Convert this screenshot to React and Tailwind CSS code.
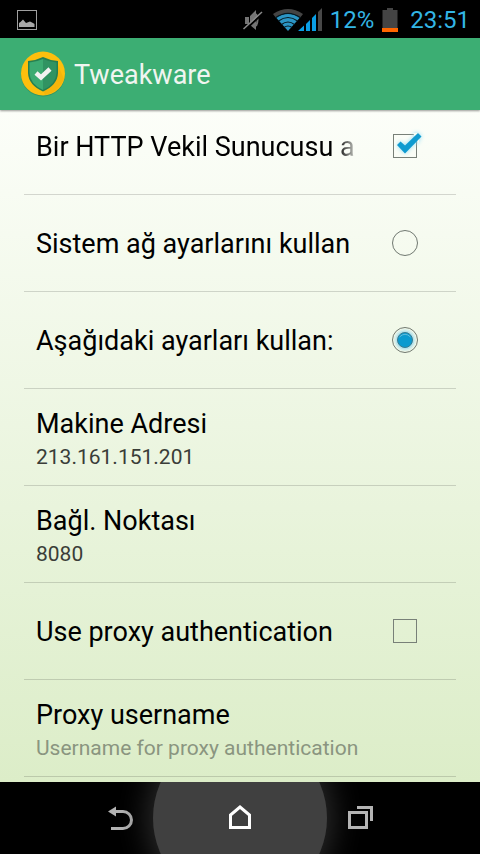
import React, { useState } from 'react';

const StatusBar = () => (
    <div className="flex h-[38px] shrink-0 items-center bg-black px-4 pt-px text-[24px] text-[#33b5e5]">
        <svg width="22" height="22" viewBox="0 0 22 22" aria-hidden="true">
            <rect x="1.5" y="1.5" width="19" height="19" fill="none" stroke="#a0a0a0" />
            <path d="M3 18V14L4.500 13L7 10.500L10 14L14 12.500L17 14L18.500 15V18Z" fill="#a8a8a8" />
        </svg>
        <div className="-mr-1.5 ml-auto flex items-center">
            <svg className="mr-2" width="22" height="24" viewBox="0 0 22 24" aria-hidden="true">
                <path d="M3 9H7V16H3ZM8 8L14 2V22L8 17Z" fill="#747474" />
                <path d="M14 6Q17 12 14 18" fill="none" stroke="#747474" strokeWidth="2" />
                <path d="M3 22L21 5" stroke="#000" strokeWidth="2" />
                <path d="M1.500 21L20 4" stroke="#8a8a8a" strokeWidth="1.5" />
            </svg>
            <svg className="mr-2" width="50" height="24" viewBox="0 0 50 24" aria-hidden="true">
                <path d="M1 6Q16 -4 31 6L28.300 9.500Q16 1.500 3.700 9.500Z" fill="#444" />
                <path d="M4 9.500Q16 2 28 9.500L16 23Z" fill="#2b95c4" />
                <g fill="none" stroke="#061820" strokeWidth="1.2">
                    <path d="M3.500 9.800Q16 1 28.500 9.800" />
                    <path d="M6.500 13Q16 6 25.500 13" />
                    <path d="M9.500 16.500Q16 11.500 22.500 16.500" />
                    <path d="M12 19.500Q16 16.500 20 19.500" />
                </g>
                <path d="M26 23L32 17.500V23ZM34 16L38 12V23H34ZM40 10L44 6V23H40Z" fill="#0a9ee5" />
                <path d="M46 4L50 0V23H46Z" fill="#484848" />
            </svg>
            <span>12%</span>
            <svg className="mx-2" width="16" height="24" viewBox="0 0 16 24" aria-hidden="true">
                <path d="M0.500 2H5V0H11V2H15.500V24H0.500Z" fill="#444" />
                <path d="M0 20H16V24H0Z" fill="#ff6600" />
            </svg>
            <span className="ml-1">23:51</span>
        </div>
    </div>
);

const Header = () => (
    <header className="z-10 flex h-[72px] shrink-0 items-center gap-2 bg-[#3cae73] pl-5 shadow-[0_1px_2px_rgba(0,0,0,0.4)]">
        <svg width="46" height="46" viewBox="0 0 46 46" aria-hidden="true">
            <circle cx="23" cy="23.500" r="22" fill="#2d8658" opacity="0.6" />
            <circle cx="23" cy="22.500" r="22" fill="#fdbf0d" />
            <path d="M37 12L44 28Q38 42 25 44L23 39Z" fill="#f5b50b" />
            <path d="M23 6Q30 9.500 38 10V22Q37.500 34 23 40.500Q8.500 34 8 22V10Q16 9.500 23 6Z" fill="#257f51" />
            <path d="M23 8Q16 11 9.500 11.500V22Q10 33 23 39Z" fill="#3cab72" />
            <path d="M23 8Q30 11 36.500 11.500V22Q36 33 23 39Z" fill="#309362" />
            <path d="M16 22L21 26.500L30 18" fill="none" stroke="#f2f2f2" strokeWidth="4.500" />
        </svg>
        <h1 className="pt-0.5 text-[27px] leading-8 text-[#f0f5f0]">Tweakware</h1>
    </header>
);

const rowStyle = 'flex h-[97px] items-center gap-8 border-b border-black/15 pl-3 pr-[38px]';

const CheckRow = ({ id, label, checked, onChange, faded }) => (
    <div className={rowStyle}>
        <label
            htmlFor={id}
            className={`min-w-0 flex-1 overflow-hidden whitespace-nowrap pt-0.5 text-[27px] leading-9 ${faded ? '[mask-image:linear-gradient(to_right,black_93%,transparent)]' : ''}`}
        >
            {label}
        </label>
        <div className="relative flex shrink-0 px-px">
            <input
                id={id}
                type="checkbox"
                checked={checked}
                onChange={onChange}
                className="size-6 appearance-none border border-[#788078]"
            />
            {checked && (
                <svg className="pointer-events-none absolute -top-1 left-0 overflow-visible drop-shadow-[0_0_2px_#8edcf5]" width="32" height="28" viewBox="0 0 32 28" aria-hidden="true">
                    <path d="M21 3H27V14Z" fill="#f8fcf3" />
                    <path d="M5 15L8.500 11.500L13 15.500L26 3L29.500 6.500L13 23.500Z" fill="#0f9bd0" />
                </svg>
            )}
        </div>
    </div>
);

const RadioRow = ({ id, label, checked, onChange }) => (
    <div className={rowStyle}>
        <label htmlFor={id} className="min-w-0 flex-1 whitespace-nowrap pt-0.5 text-[27px] leading-9">{label}</label>
        <div className="relative flex shrink-0">
            <input
                id={id}
                type="radio"
                name="network"
                checked={checked}
                onChange={onChange}
                className="size-[26px] appearance-none rounded-full border border-[#707870]"
            />
            {checked && (
                <svg className="pointer-events-none absolute inset-0" width="26" height="26" viewBox="0 0 26 26" aria-hidden="true">
                    <circle cx="13" cy="13" r="11" fill="#d9efea" />
                    <circle cx="13" cy="13" r="9.500" fill="#b9e3ea" />
                    <circle cx="13" cy="13" r="7.500" fill="#0a9acf" stroke="#397c91" />
                    <path d="M7.500 10Q13 4.500 18.500 10" fill="none" stroke="#62bddc" />
                </svg>
            )}
        </div>
    </div>
);

const TextRow = ({ title, summary, disabled }) => (
    <div className="flex h-[97px] flex-col justify-center border-b border-black/15 px-3 pt-1">
        <p className="text-[27px] leading-9">{title}</p>
        <p className={`text-[21px] leading-[30px] ${disabled ? 'text-[#8a9580]' : 'text-[#3a3d38]'}`}>{summary}</p>
    </div>
);

const NavBar = () => (
    <nav className="flex h-[72px] shrink-0 items-center justify-center overflow-hidden bg-black">
        <button aria-label="Back" className="flex h-full w-[120px] items-center justify-center">
            <svg width="26" height="26" viewBox="0 0 26 26" fill="none" aria-hidden="true">
                <path d="M6 6.500H16A8.500 8.500 0 0 1 16 23.500H4" stroke="#b4b4b4" strokeWidth="3" />
                <path d="M1 6.500L9 1.500V11.500Z" fill="#b4b4b4" />
            </svg>
        </button>
        <button aria-label="Home" className="relative flex h-full w-[120px] items-center justify-center">
            <span className="absolute -inset-x-[27px] -inset-y-[51px] rounded-full bg-[#404040] shadow-[0_0_32px_4px_#303030]" />
            <svg className="relative" width="24" height="26" viewBox="0 0 24 26" fill="none" aria-hidden="true">
                <path d="M2.500 22.500V10L12 2L21.500 10V22.500Z" stroke="#fff" strokeWidth="3" />
            </svg>
        </button>
        <button aria-label="Recent apps" className="relative flex h-full w-[120px] items-center justify-center">
            <svg width="26" height="26" viewBox="0 0 26 26" fill="none" stroke="#b4b4b4" strokeWidth="3" aria-hidden="true">
                <path d="M2.500 7.500H19.500V22.500H2.500Z" />
                <path d="M10 2.500H24.500V16" />
            </svg>
        </button>
    </nav>
);

const App = () => {
    const [useProxy, setUseProxy] = useState(true);
    const [network, setNetwork] = useState('custom');
    const [useAuth, setUseAuth] = useState(false);

    return (
        <div className="flex h-screen flex-col font-[Roboto,sans-serif] text-black">
            <StatusBar />
            <Header />
            <main className="flex-1 overflow-hidden bg-linear-to-b from-[#fcfef9] to-[#dcedc8] px-6">
                {/* list is scrolled a little under the header */}
                <div className="-mt-3">
                    <CheckRow
                        id="http-proxy"
                        label="Bir HTTP Vekil Sunucusu a"
                        checked={useProxy}
                        onChange={() => setUseProxy(!useProxy)}
                        faded
                    />
                    <RadioRow
                        id="system"
                        label="Sistem ağ ayarlarını kullan"
                        checked={network === 'system'}
                        onChange={() => setNetwork('system')}
                    />
                    <RadioRow
                        id="custom"
                        label="Aşağıdaki ayarları kullan:"
                        checked={network === 'custom'}
                        onChange={() => setNetwork('custom')}
                    />
                    <TextRow title="Makine Adresi" summary="213.161.151.201" />
                    <TextRow title="Bağl. Noktası" summary="8080" />
                    <CheckRow
                        id="proxy-auth"
                        label="Use proxy authentication"
                        checked={useAuth}
                        onChange={() => setUseAuth(!useAuth)}
                    />
                    <TextRow title="Proxy username" summary="Username for proxy authentication" disabled />
                </div>
            </main>
            <NavBar />
        </div>
    );
};

export default App;
